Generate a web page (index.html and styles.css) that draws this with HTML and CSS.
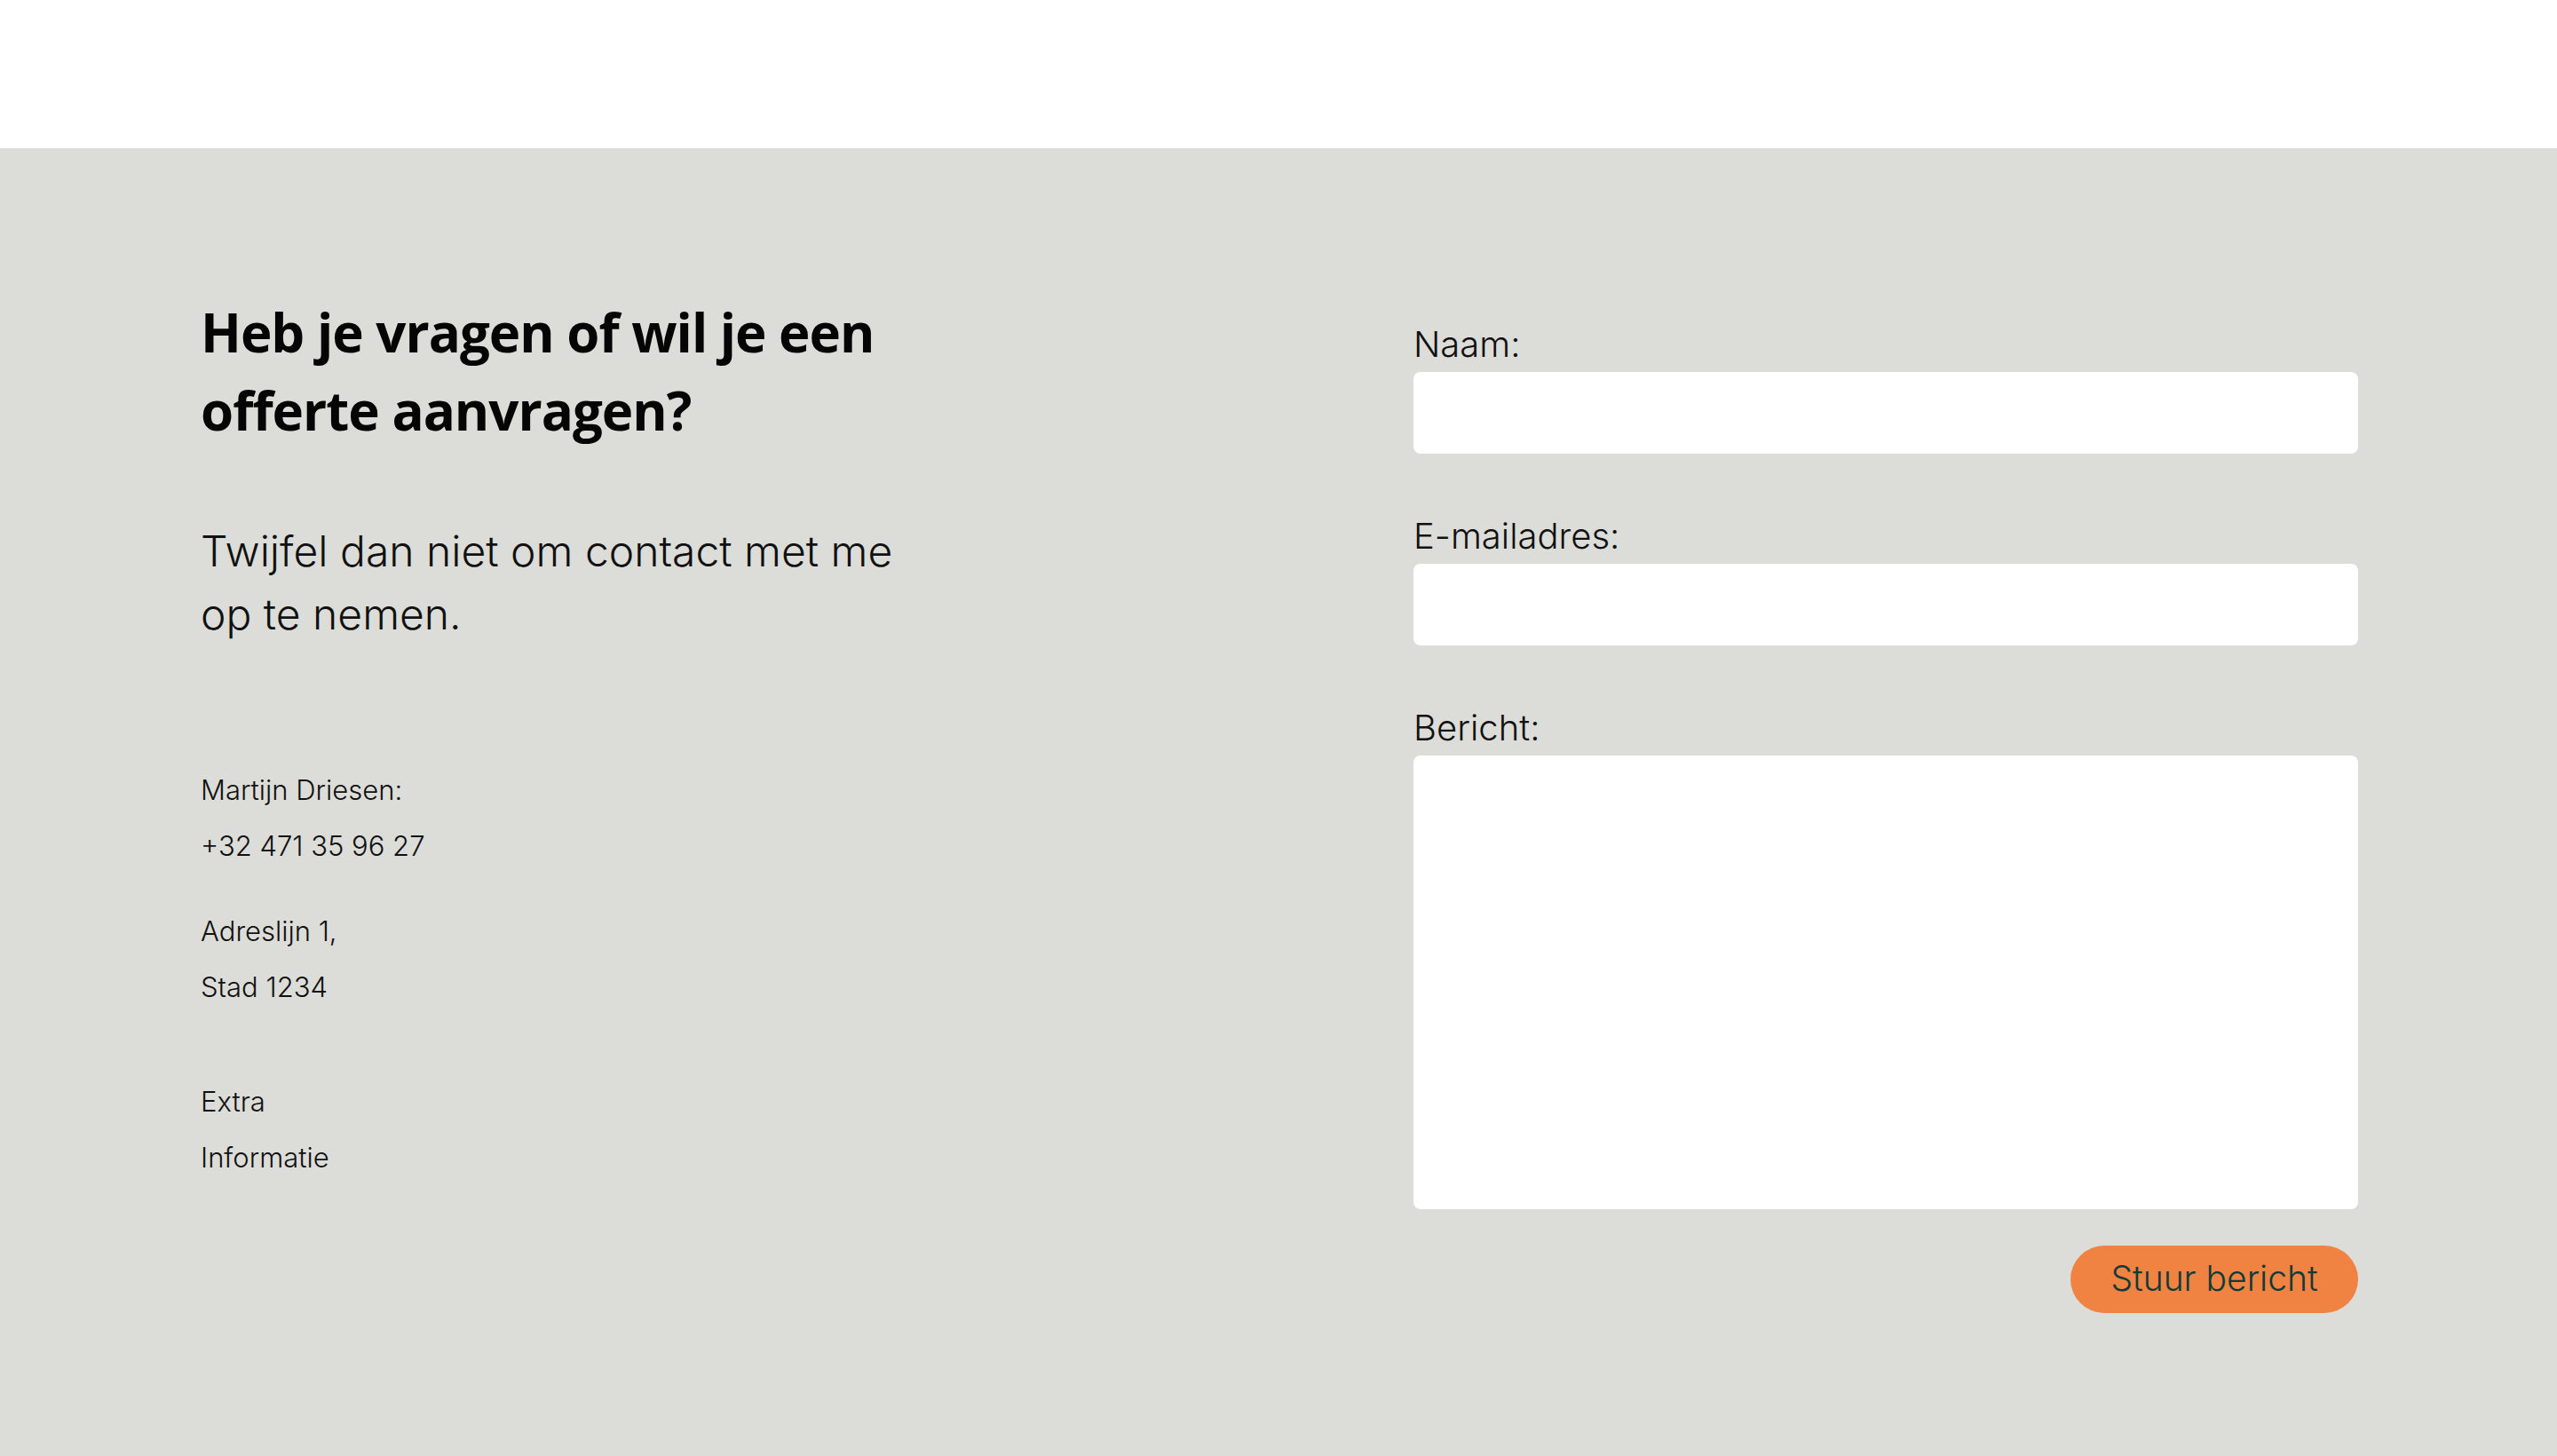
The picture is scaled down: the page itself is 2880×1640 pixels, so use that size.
FILE: index.html
```html
<!DOCTYPE html>
<html lang="nl">
<head>
<meta charset="utf-8">
<title>Contact</title>
<link rel="stylesheet" href="styles.css">
</head>
<body>
<header class="topbar"></header>
<section class="contact">
  <div class="contact-inner">
    <div class="intro">
      <h2 class="title">Heb je vragen of wil je een<br>offerte aanvragen?</h2>
      <p class="lead">Twijfel dan niet om contact met me<br>op te nemen.</p>
      <p class="info">Martijn Driesen:<br>+32 471 35 96 27</p>
      <p class="info">Adreslijn 1,<br>Stad 1234</p>
      <p class="info info-extra">Extra<br>Informatie</p>
    </div>
    <form class="form">
      <div class="field">
        <label class="label" for="naam">Naam:</label>
        <input class="input" id="naam" type="text">
      </div>
      <div class="field">
        <label class="label" for="email">E-mailadres:</label>
        <input class="input" id="email" type="email">
      </div>
      <div class="field field-last">
        <label class="label" for="bericht">Bericht:</label>
        <textarea class="input textarea" id="bericht"></textarea>
      </div>
      <div class="actions">
        <button class="button" type="button">Stuur bericht</button>
      </div>
    </form>
  </div>
</section>
</body>
</html>
```

FILE: styles.css
```css
html, body {
  margin: 0;
  padding: 0;
  background: #ffffff;
}

body {
  font-family: Inter, "Noto Sans", sans-serif;
  color: #111111;
}

.topbar {
  height: 167px;
  background: #ffffff;
}

.contact {
  background: #dcddd8;
  min-height: 1473px;
}

.contact-inner {
  margin: 0 224px;
  display: grid;
  grid-template-columns: 1fr 1064px;
  column-gap: 120px;
}

.intro {
  padding-top: 163px;
  padding-left: 2px;
}

.title {
  margin: 0;
  font-family: "Open Sans", "Noto Sans", sans-serif;
  font-weight: 700;
  font-size: 60px;
  line-height: 88px;
  letter-spacing: -1px;
  color: #050505;
}

.lead {
  margin: 79px 0 0;
  font-weight: 300;
  font-size: 48px;
  line-height: 71px;
  color: #111111;
}

.info {
  margin: 33px 0 0;
  font-weight: 300;
  font-size: 31px;
  line-height: 63px;
  color: #111111;
}

.lead + .info {
  margin-top: 131px;
}

.info-extra {
  margin-top: 66px;
}

.form {
  padding-top: 197px;
  display: flex;
  flex-direction: column;
}

.field {
  display: flex;
  flex-direction: column;
  margin-bottom: 69px;
}

.field-last {
  margin-bottom: 41px;
}

.label {
  font-weight: 300;
  font-size: 40px;
  line-height: 48px;
  margin-bottom: 7px;
  color: #111111;
}

.input {
  box-sizing: border-box;
  width: 100%;
  height: 92px;
  border: none;
  border-radius: 8px;
  background: #ffffff;
  outline: none;
  padding: 0 24px;
  font-family: inherit;
  font-size: 32px;
}

.textarea {
  height: 511px;
  resize: none;
  padding: 20px 24px;
  display: block;
}

.actions {
  display: flex;
  justify-content: flex-end;
}

.button {
  width: 324px;
  height: 76px;
  border: none;
  border-radius: 38px;
  background: #f08242;
  color: #0e3b39;
  font-family: Inter, "Noto Sans", sans-serif;
  font-weight: 300;
  font-size: 39px;
  line-height: 1;
  padding: 0 0 4px;
  cursor: pointer;
}
```
